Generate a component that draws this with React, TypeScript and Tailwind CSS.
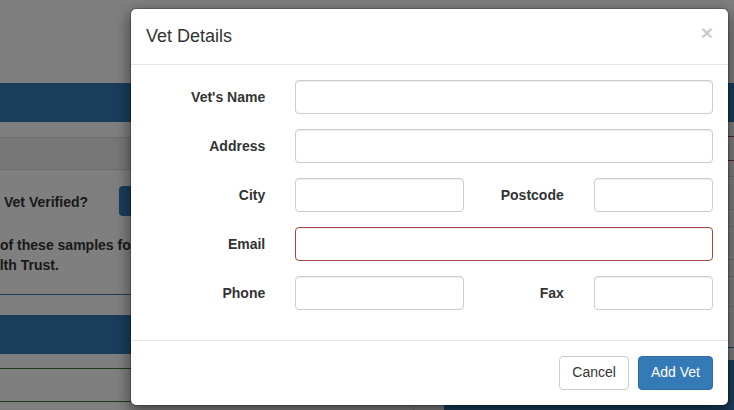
import React from 'react';

const font = "font-['Liberation_Sans','Helvetica_Neue',Arial,sans-serif]";

const inputBase =
  'block w-full h-[34px] rounded-[4px] border bg-white px-3 text-[14px] text-[#555] shadow-[inset_0_1px_1px_rgba(0,0,0,0.075)] outline-none';

function Label({ children }: { children: React.ReactNode }) {
  return (
    <label className="block pt-[7px] text-right text-[14px] leading-[20px] font-bold text-[#333]">
      {children}
    </label>
  );
}

function Field({ invalid }: { invalid?: boolean }) {
  return <input type="text" className={`${inputBase} ${invalid ? 'border-[#a94442]' : 'border-[#ccc]'}`} />;
}

function BackgroundPage() {
  return (
    <div className="flex flex-col">
      <div className="h-[83px]" />
      <div className="h-[39px] bg-[#337ab7]" />
      <div className="flex">
        {/* left column */}
        <div className="w-[414px] border-r border-[#ddd] h-[290px]">
          <div className="h-[15px]" />
          <div className="h-[33px] bg-[#eee] border-y border-[#ddd]" />
          <div className="pt-[16px] flex items-center">
            <span className="w-[119px] pl-[4px] pt-[3px] text-[14px] font-bold text-[#333] whitespace-nowrap">
              Vet Verified?
            </span>
            <div className="h-[30px] w-[80px] rounded-[4px] bg-[#337ab7]" />
          </div>
          <div className="mt-[19px] text-[14px] leading-[20px] font-bold text-[#333] whitespace-nowrap">
            <div>of these samples for research by the Animal</div>
            <div className="-ml-[26px]">Health Trust.</div>
          </div>
          <div className="h-[20px] border-b border-[#337ab7]" />
          <div className="h-[20px]" />
          <div className="h-[39px] bg-[#337ab7]" />
          <div className="h-[15px] border-b border-[#3c763d]" />
          <div className="h-[33px] border-b border-[#3c763d]" />
        </div>
        <div className="w-[30px]" />
        {/* right column */}
        <div className="flex-1 h-[290px]">
          <div className="h-[15px] border-b border-[#a94442]" />
          <div className="h-[24px] border-b border-[#a94442]" />
          <div className="h-[16px] border-b border-[#ddd]" />
          <div className="h-[33px] border-b border-[#ddd]" />
          <div className="h-[17px] border-b border-[#ddd]" />
          <div className="h-[33px] border-b border-[#ddd]" />
          <div className="h-[17px] border-b border-[#ddd]" />
          <div className="h-[30px] border-b border-[#ddd]" />
          <div className="h-[41px] border-b border-[#337ab7]" />
          <div className="h-[12px]" />
          <div className="h-[60px] bg-[#337ab7]" />
        </div>
      </div>
    </div>
  );
}

export default function App() {
  return (
    <div className={`relative w-[734px] h-[410px] overflow-hidden bg-white ${font}`}>
      <BackgroundPage />

      {/* backdrop */}
      <div className="absolute inset-0 bg-black/50" />

      {/* modal */}
      <div className="absolute left-[130px] top-[8px] w-[599px] rounded-[6px] border border-black/20 bg-white bg-clip-padding shadow-[0_5px_15px_rgba(0,0,0,0.5)]">
        <div className="flex items-start justify-between p-[15px] border-b border-[#e5e5e5]">
          <h4 className="text-[18px] leading-[24.7px] text-[#333]">Vet Details</h4>
          <button className="-mt-[2px] text-[21px] leading-none font-bold text-black opacity-20">×</button>
        </div>

        <div className="py-[15px]">
          <div className="grid grid-cols-12 mb-[15px]">
            <div className="col-span-3 px-[15px]"><Label>Vet's Name</Label></div>
            <div className="col-span-9 px-[15px]"><Field /></div>
          </div>
          <div className="grid grid-cols-12 mb-[15px]">
            <div className="col-span-3 px-[15px]"><Label>Address</Label></div>
            <div className="col-span-9 px-[15px]"><Field /></div>
          </div>
          <div className="grid grid-cols-12 mb-[15px]">
            <div className="col-span-3 px-[15px]"><Label>City</Label></div>
            <div className="col-span-4 px-[15px]"><Field /></div>
            <div className="col-span-2 px-[15px]"><Label>Postcode</Label></div>
            <div className="col-span-3 px-[15px]"><Field /></div>
          </div>
          <div className="grid grid-cols-12 mb-[15px]">
            <div className="col-span-3 px-[15px]"><Label>Email</Label></div>
            <div className="col-span-9 px-[15px]"><Field invalid /></div>
          </div>
          <div className="grid grid-cols-12 mb-[15px]">
            <div className="col-span-3 px-[15px]"><Label>Phone</Label></div>
            <div className="col-span-4 px-[15px]"><Field /></div>
            <div className="col-span-2 px-[15px]"><Label>Fax</Label></div>
            <div className="col-span-3 px-[15px]"><Field /></div>
          </div>
        </div>

        <div className="flex justify-end gap-[9px] p-[15px] border-t border-[#e5e5e5]">
          <button className="h-[34px] px-[12px] rounded-[4px] border border-[#ccc] bg-white text-[14px] text-[#333]">
            Cancel
          </button>
          <button className="h-[34px] px-[12px] rounded-[4px] border border-[#2e6da4] bg-[#337ab7] text-[14px] text-white">
            Add Vet
          </button>
        </div>
      </div>
    </div>
  );
}
